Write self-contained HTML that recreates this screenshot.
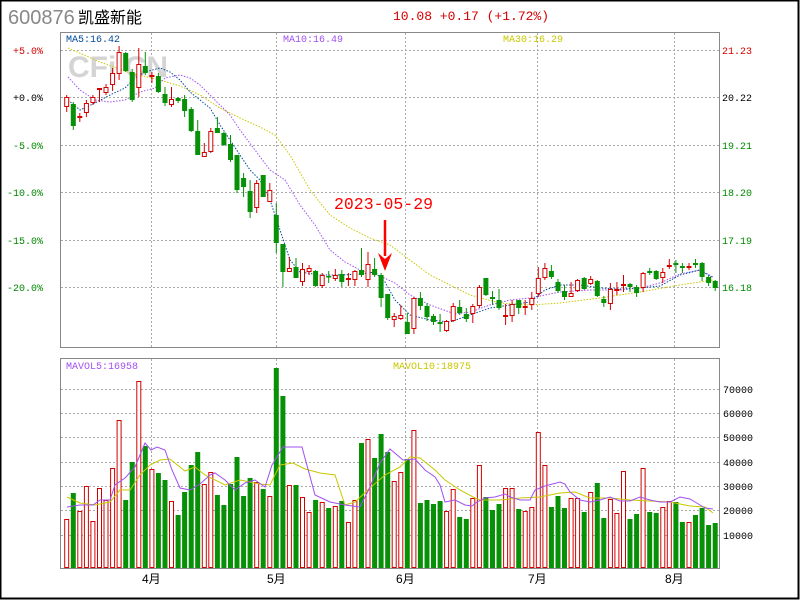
<!DOCTYPE html>
<html><head><meta charset="utf-8"><style>
html,body{margin:0;padding:0;background:#fff}
svg{display:block}
</style></head><body>
<svg width="800" height="600" viewBox="0 0 800 600" xmlns="http://www.w3.org/2000/svg" font-family="'Liberation Mono', monospace">
<rect x="0.5" y="0.5" width="798" height="598" fill="#fff" stroke="#000" stroke-width="2"/>
<text x="8" y="24" font-family="'Liberation Sans',sans-serif" font-size="20" fill="#888">600876</text>
<text x="78" y="23" font-family="'Liberation Sans','Noto Sans CJK SC',sans-serif" font-size="16" fill="#000">凯盛新能</text>
<text x="393" y="20" font-size="13" fill="#d40000">10.08 +0.17 (+1.72%)</text>
<rect x="60.5" y="32.5" width="659" height="315" fill="#fff" stroke="#888"/>
<g stroke="#aaa" stroke-dasharray="2 2" fill="none">
<path d="M61 50.5H719M61 97.5H719M61 145.5H719M61 192.5H719M61 240.5H719M61 287.5H719"/>
<path d="M151.5 33V347M276.5 33V347M405.5 33V347M537.5 33V347M674.5 33V347"/>
<path d="M61 389.5H719M61 413.5H719M61 437.5H719M61 462.5H719M61 486.5H719M61 510.5H719M61 535.5H719"/>
<path d="M151.5 359V568M276.5 359V568M405.5 359V568M537.5 359V568M674.5 359V568"/>
</g>
<text x="68" y="77" font-family="'Liberation Sans',sans-serif" font-weight="bold" font-size="30" fill="#d4d4d4">CFi CN</text>
<text x="66" y="42" font-size="10" fill="#004a9a">MA5:16.42</text>
<text x="283" y="42" font-size="10" fill="#a050f0">MA10:16.49</text>
<text x="503" y="42" font-size="10" fill="#c8c800">MA30:16.29</text>
<g font-size="10" text-anchor="end">
<text x="43" y="54" fill="#d40000">+5.0%</text>
<text x="43" y="101" fill="#000">+0.0%</text>
<text x="43" y="149" fill="#008800">-5.0%</text>
<text x="43" y="196" fill="#008800">-10.0%</text>
<text x="43" y="244" fill="#008800">-15.0%</text>
<text x="43" y="291" fill="#008800">-20.0%</text>
</g>
<g font-size="10">
<text x="722" y="54" fill="#d40000">21.23</text>
<text x="722" y="101" fill="#000">20.22</text>
<text x="722" y="149" fill="#008800">19.21</text>
<text x="722" y="196" fill="#008800">18.20</text>
<text x="722" y="244" fill="#008800">17.19</text>
<text x="722" y="291" fill="#008800">16.18</text>
</g>
<g fill="none" stroke-width="1" stroke-dasharray="1.5 1.5">
<polyline stroke="#c8c800" points="68,48 100,62 130,73 160,80 180,86 200,95 220,108 240,118 260,127 275,135 290,155 310,190 330,215 350,228 370,238 390,245 410,260 430,275 450,285 470,295 500,303 530,305 560,303 600,298 640,292 680,285 713,280"/>
<polyline stroke="#a050f0" points="68,77 80,90 95,100 110,102 125,100 140,92 155,88 165,78 180,75 190,78 200,85 215,100 230,115 240,130 255,150 270,170 285,180 300,205 315,225 330,250 345,262 360,270 380,276 395,283 410,295 430,305 455,314 470,312 490,305 510,300 530,298 560,292 590,290 620,290 640,288 660,283 680,274 700,270 713,277"/>
<polyline stroke="#004a9a" points="68,100 80,110 95,103 110,95 125,88 135,78 145,72 160,68 170,72 180,80 190,92 200,100 210,108 220,125 230,140 240,155 250,170 260,180 270,200 280,230 290,260 300,272 320,275 340,275 360,274 375,272 385,282 395,300 410,315 430,320 450,322 470,315 490,308 510,305 530,302 545,290 560,285 580,285 600,288 620,289 640,288 660,286 680,275 700,270 713,278"/>
</g>
<g stroke="#079107" fill="none">
<path stroke-width="1" d="M73.3 102V130M125.7 52V72M132.2 69V102M145.3 52V75M158.4 73V93M165 87V106M178.1 97V103M184.6 95V117M191.2 107V132M197.7 120V155M217.4 117V133M223.9 132V146M230.5 135V162M237 155V193M243.6 173V197M250.1 180V218M263.2 175V197M276.3 203V253M282.9 244V287M296 258V278M315.6 270V287M328.7 271V283M341.8 270V287M361.5 248V277M374.6 258V277M381.1 273V307M387.7 294V320M407.3 313V334M420.4 292V310M427 303V321M433.5 314V325M440.1 314V332M459.7 300V315M466.3 308V322M485.9 278V296M492.5 291V305M499 289V310M518.7 300V314M551.4 265V279M558 279V293M564.5 285V300M584.2 277V290M597.3 280V297M603.8 296V307M630 283V292M636.6 285V297M649.7 268V275M656.2 270V280M675.9 260V273M682.4 263V273M695.5 259V268M702.1 262V281M708.6 276V286M715.2 280V291"/>
<path stroke-width="5" d="M73.3 104v22M125.7 53v18M132.2 72v28M145.3 66v7M158.4 76v16M165 94v9M178.1 98v3M184.6 99v12M191.2 109v22M197.7 131v24M217.4 128v5M223.9 133v12M230.5 144v16M237 155v35M243.6 178v9M250.1 191v21M263.2 175v22M276.3 215v28M282.9 244v28M296 267v11M315.6 271v15M328.7 276v1.5M341.8 274v8M361.5 270v5M374.6 269v6M381.1 275v23M387.7 294v24M407.3 322v12M420.4 298v8M427 306v11M433.5 316v6M440.1 322v2M459.7 307v6M466.3 314v5M485.9 278v17M492.5 297v2M499 300v8M518.7 300v8M551.4 271v6M558 282v9M564.5 291v6M584.2 278v11M597.3 281v15M603.8 299v4M630 284v3M636.6 287v6M649.7 271v2M656.2 271v8M675.9 263v2M682.4 266v2M695.5 263v2M702.1 263v14M708.6 277v6M715.2 281v7"/>
</g>
<g stroke="#d40000" stroke-width="1" fill="#fff">
<path fill="none" d="M66.7 95V112M79.8 113V122M86.4 100V117M92.9 95V105M99.5 88V102M106 84V95M112.6 68V91M119.1 46V80M138.8 48V97M151.9 72V83M171.5 87V107M204.3 143V157M210.8 128V153M256.7 180V213M269.8 183V202M289.4 257V272M302.5 263V286M309.1 265V275M322.2 273V288M335.3 269V281M348.4 273V286M354.9 270V286M368 252V287M394.2 313V327M400.8 305V320M413.9 297V334M446.6 320V332M453.2 303V322M472.8 304V323M479.4 285V308M505.6 304V325M512.1 300V322M525.2 300V315M531.8 292V310M538.3 267V297M544.9 263V280M571.1 282V297M577.6 279V292M590.7 276V285M610.4 283V310M616.9 282V295M623.5 275V292M643.1 272V292M662.8 268V283M669.3 259V269M689 263V270"/>
<path d="M64.7 97.5h4v9h-4zM77.8 116.5h4v1h-4zM84.4 103.5h4v9h-4zM90.9 97.5h4v5h-4zM97.5 88.5h4v1h-4zM104 87.5h4v5h-4zM110.6 73.5h4v11h-4zM117.1 52.5h4v21h-4zM136.8 64.5h4v23h-4zM149.9 75.5h4v1h-4zM169.5 99.5h4v5h-4zM202.3 152.5h4v4h-4zM208.8 131.5h4v20h-4zM254.7 183.5h4v24h-4zM267.8 190.5h4v11h-4zM287.4 268.5h4v3h-4zM300.5 269.5h4v12h-4zM307.1 268.5h4v3h-4zM320.2 275.5h4v10h-4zM333.3 275.5h4v3h-4zM346.4 278.5h4v1h-4zM352.9 271.5h4v8h-4zM366 264.5h4v15h-4zM392.2 316.5h4v3h-4zM398.8 315.5h4v3h-4zM411.9 298.5h4v30h-4zM444.6 321.5h4v9h-4zM451.2 306.5h4v14h-4zM470.8 306.5h4v7h-4zM477.4 287.5h4v18h-4zM503.6 315.5h4v1h-4zM510.1 304.5h4v11h-4zM523.2 306.5h4v1h-4zM529.8 298.5h4v6h-4zM536.3 278.5h4v15h-4zM542.9 268.5h4v9h-4zM569.1 293.5h4v3h-4zM575.6 280.5h4v10h-4zM588.7 279.5h4v4h-4zM608.4 289.5h4v14h-4zM614.9 289.5h4v1h-4zM621.5 284.5h4v1h-4zM641.1 273.5h4v14h-4zM660.8 272.5h4v5h-4zM667.3 265.5h4v1h-4zM687 266.5h4v1h-4z"/>
</g>
<text x="334" y="209" font-size="16.5" fill="#ff0000">2023-05-29</text>
<path d="M385 220V256" stroke="#ff0000" stroke-width="2.5"/>
<path d="M378 253L385 271L392 253L385 259Z" fill="#ff0000"/>
<rect x="60.5" y="358.5" width="659" height="210" fill="none" stroke="#888"/>
<text x="66" y="369" font-size="10" fill="#a050f0">MAVOL5:16958</text>
<text x="393" y="369" font-size="10" fill="#c8c800">MAVOL10:18975</text>
<g font-size="10" fill="#000">
<text x="723" y="393">70000</text>
<text x="723" y="417">60000</text>
<text x="723" y="441">50000</text>
<text x="723" y="466">40000</text>
<text x="723" y="490">30000</text>
<text x="723" y="514">20000</text>
<text x="723" y="539">10000</text>
</g>
<path stroke="#079107" stroke-width="5" fill="none" d="M73.3 493V568M125.7 500V568M132.2 462V568M145.3 446V568M158.4 473V568M165 480V568M178.1 515V568M184.6 492V568M191.2 465V568M197.7 452V568M217.4 495V568M223.9 505V568M230.5 484V568M237 457V568M243.6 496V568M250.1 478V568M263.2 489V568M276.3 368V568M282.9 396V568M296 485V568M315.6 500V568M328.7 508V568M341.8 501V568M361.5 443V568M374.6 458V568M381.1 434V568M387.7 452V568M407.3 459V568M420.4 503V568M427 500V568M433.5 504V568M440.1 501V568M459.7 517V568M466.3 519V568M485.9 497V568M492.5 510V568M499 504V568M518.7 509V568M551.4 507V568M558 496V568M564.5 508V568M584.2 512V568M597.3 483V568M603.8 518V568M630 519V568M636.6 514V568M649.7 512V568M656.2 513V568M675.9 502V568M682.4 522V568M695.5 515V568M702.1 508V568M708.6 525V568M715.2 523V568"/>
<path stroke="#d40000" stroke-width="1" fill="#fff" d="M64.7 519.5h4v48h-4zM77.8 511.5h4v56h-4zM84.4 486.5h4v81h-4zM90.9 521.5h4v46h-4zM97.5 488.5h4v79h-4zM104 500.5h4v67h-4zM110.6 468.5h4v99h-4zM117.1 420.5h4v147h-4zM136.8 381.5h4v186h-4zM149.9 469.5h4v98h-4zM169.5 501.5h4v66h-4zM202.3 484.5h4v83h-4zM208.8 472.5h4v95h-4zM254.7 482.5h4v85h-4zM267.8 496.5h4v71h-4zM287.4 485.5h4v82h-4zM300.5 497.5h4v70h-4zM307.1 512.5h4v55h-4zM320.2 502.5h4v65h-4zM333.3 506.5h4v61h-4zM346.4 522.5h4v45h-4zM352.9 500.5h4v67h-4zM366 439.5h4v128h-4zM392.2 481.5h4v86h-4zM398.8 472.5h4v95h-4zM411.9 430.5h4v137h-4zM444.6 511.5h4v56h-4zM451.2 489.5h4v78h-4zM470.8 498.5h4v69h-4zM477.4 465.5h4v102h-4zM503.6 488.5h4v79h-4zM510.1 488.5h4v79h-4zM523.2 511.5h4v56h-4zM529.8 507.5h4v60h-4zM536.3 432.5h4v135h-4zM542.9 465.5h4v102h-4zM569.1 498.5h4v69h-4zM575.6 498.5h4v69h-4zM588.7 492.5h4v75h-4zM608.4 499.5h4v68h-4zM614.9 513.5h4v54h-4zM621.5 471.5h4v96h-4zM641.1 468.5h4v99h-4zM660.8 507.5h4v60h-4zM667.3 501.5h4v66h-4zM687 522.5h4v45h-4z"/>
<polyline fill="none" stroke="#c8c800" stroke-width="1" points="67,497 80,503 95,505 110,502 120,490 130,490 140,475 150,465 160,460 170,459 185,471 195,467 205,475 225,485 240,480 260,484 270,485 280,465 293,463 305,469 320,473 335,475 345,505 355,502 370,488 385,475 400,467 410,457 420,458 435,470 445,480 460,490 475,498 480,500 500,500 520,498 540,497 560,493 575,492 590,498 610,498 630,500 650,501 670,502 690,506 705,507 713,513"/>
<polyline fill="none" stroke="#a050f0" stroke-width="1" points="67,507 80,505 93,505 100,500 110,500 115,485 125,478 135,467 140,455 145,443 151,450 157,447 165,450 172,470 180,488 190,490 200,484 210,475 215,473 225,480 235,490 245,483 255,480 265,487 272,465 283,447 302,447 315,495 330,502 345,505 360,507 370,487 380,463 390,449 403,460 415,459 425,470 435,477 440,485 445,502 455,500 465,505 472,506 477,502 485,498 495,497 505,494 510,497 520,500 530,500 535,490 545,486 560,482 565,484 570,492 580,500 590,502 600,500 610,497 620,501 630,501 640,497 650,500 660,502 670,502 680,497 690,499 700,505 705,508 713,509"/>
<g font-family="'Liberation Sans','Noto Sans CJK SC',sans-serif" font-size="12" fill="#000">
<text x="142" y="583">4月</text>
<text x="267" y="583">5月</text>
<text x="396" y="583">6月</text>
<text x="528" y="583">7月</text>
<text x="665" y="583">8月</text>
</g>
</svg>
</body></html>
